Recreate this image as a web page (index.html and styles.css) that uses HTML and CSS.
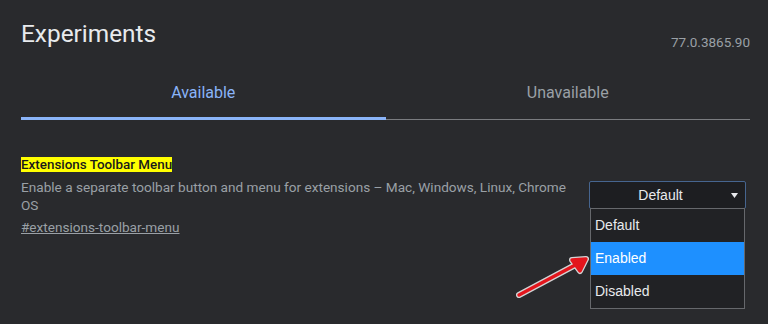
FILE: index.html
```html
<!DOCTYPE html>
<html>
<head>
<meta charset="utf-8">
<link rel="stylesheet" href="styles.css">
</head>
<body>
<div class="page">
  <div class="header">
    <h1 class="title">Experiments</h1>
    <span class="version">77.0.3865.90</span>
  </div>
  <div class="tabs">
    <div class="tab active">Available</div>
    <div class="tab">Unavailable</div>
  </div>
  <div class="experiment">
    <div class="exp-text">
      <div class="exp-name"><span class="highlight">Extensions Toolbar Menu</span></div>
      <p class="exp-desc">Enable a separate toolbar button and menu for extensions – Mac, Windows, Linux, Chrome OS</p>
      <a class="exp-link" href="#">#extensions-toolbar-menu</a>
    </div>
    <div class="select-wrap">
      <div class="select">
        <span class="select-value">Default</span>
        <svg class="select-arrow" width="7" height="5" viewBox="0 0 7 5"><path d="M0 0H7L3.5 5Z" fill="#e8eaed"/></svg>
      </div>
      <ul class="options">
        <li class="option">Default</li>
        <li class="option selected">Enabled</li>
        <li class="option">Disabled</li>
      </ul>
    </div>
  </div>
</div>
<svg class="pointer" width="768" height="324" viewBox="0 0 768 324">
  <g stroke="#ffffff" stroke-width="6" stroke-linecap="round" stroke-linejoin="round" fill="#ffffff" opacity="0.8">
    <line x1="519" y1="295" x2="579" y2="263"/>
    <path d="M586 259 L572 260 L580 271 Z"/>
  </g>
  <g stroke="#e3151c" stroke-width="3.4" stroke-linecap="round" stroke-linejoin="round" fill="#e3151c">
    <line x1="519" y1="295" x2="579" y2="263"/>
    <path d="M586 259 L572 260 L580 271 Z"/>
  </g>
</svg>
</body>
</html>
```
FILE: styles.css
```css
html, body {
  margin: 0;
  padding: 0;
  background: #292a2d;
  width: 768px;
  height: 324px;
  overflow: hidden;
  font-family: Roboto, "Noto Sans", "Liberation Sans", sans-serif;
}

.page {
  padding: 20px 18px 0 21px;
}

.header {
  display: flex;
  justify-content: space-between;
  align-items: flex-start;
}

.title {
  margin: 0;
  font-size: 24.4px;
  line-height: 28px;
  font-weight: 400;
  color: #e8eaed;
}

.version {
  margin-top: 14px;
  font-size: 13.5px;
  line-height: 16px;
  color: #9aa0a6;
}

.tabs {
  display: flex;
  margin-top: 21px;
}

.tab {
  flex: 1;
  text-align: center;
  font-size: 16px;
  line-height: 20px;
  padding: 12px 0 16px;
  color: #9aa0a6;
  border-bottom: 1px solid #7a7c80;
}

.tab.active {
  color: #8ab4f8;
  padding-bottom: 14px;
  border-bottom: 3px solid #8ab4f8;
}

.experiment {
  display: flex;
  justify-content: space-between;
  align-items: flex-start;
  margin-top: 36px;
}

.exp-text {
  width: 552px;
}

.exp-name {
  font-size: 13.4px;
  line-height: 18px;
  font-weight: 500;
}

.highlight {
  background: #ffff00;
  color: #1a1a1a;
}

.exp-desc {
  margin: 4px 0 0;
  font-size: 13.6px;
  line-height: 18px;
  color: #9aa0a6;
}

.exp-link {
  display: inline-block;
  margin-top: 4px;
  font-size: 13.6px;
  line-height: 18px;
  color: #9aa0a6;
  text-decoration: underline;
}

.select-wrap {
  position: relative;
  margin-top: 25px;
  margin-right: 4px;
  width: 157px;
}

.select {
  position: relative;
  box-sizing: border-box;
  height: 28px;
  padding-right: 14px;
  background: #1d1e21;
  border: 1px solid #46658f;
  border-radius: 2px;
  display: flex;
  align-items: center;
  justify-content: center;
  font-family: "Liberation Sans", Arial, sans-serif;
  font-size: 14px;
  color: #e8eaed;
}

.select-arrow {
  position: absolute;
  right: 7px;
  top: 11px;
}

.options {
  position: absolute;
  top: 27px;
  left: 1px;
  width: 155px;
  box-sizing: border-box;
  margin: 0;
  padding: 0;
  list-style: none;
  background: #212225;
  border: 1px solid #66686c;
  font-family: "Liberation Sans", Arial, sans-serif;
  font-size: 14px;
  color: #e8eaed;
}

.option {
  height: 33px;
  line-height: 33px;
  padding-left: 4px;
}

.option.selected {
  background: #1e90ff;
  color: #ffffff;
}

.pointer {
  position: absolute;
  left: 0;
  top: 0;
  pointer-events: none;
}
```
